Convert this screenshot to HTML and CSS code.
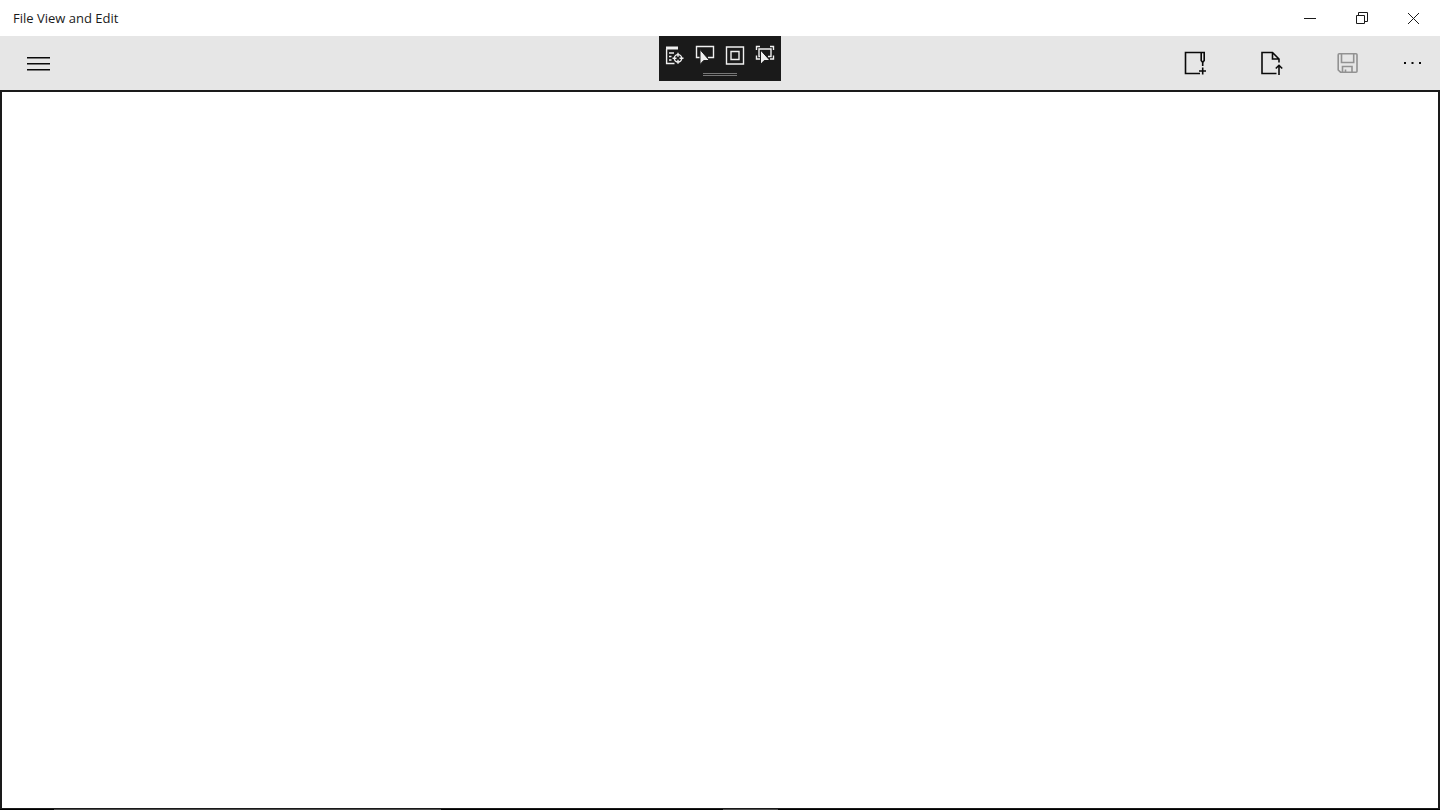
FILE: index.html
```html
<!DOCTYPE html>
<html lang="en">
<head>
    <meta charset="UTF-8">
    <meta name="viewport" content="width=device-width, initial-scale=1.0">
    <title>File View and Edit</title>
    <link rel="stylesheet" href="styles.css">
</head>
<body>

    <!-- Title bar -->
    <header class="titlebar">
        <h1>File View and Edit</h1>
        <div class="window-buttons">
            <button type="button" aria-label="Minimize">
                <svg width="14" height="14" viewBox="0 0 14 14"><path d="M1 7.5h12"/></svg>
            </button>
            <button type="button" aria-label="Restore">
                <svg width="14" height="14" viewBox="0 0 14 14"><path d="M1.5 4.5h8v8h-8zM3.5 4.5v-3h9v9h-3"/></svg>
            </button>
            <button type="button" aria-label="Close">
                <svg width="14" height="14" viewBox="0 0 14 14"><path d="M1 2l11 11M12 2L1 13"/></svg>
            </button>
        </div>
    </header>

    <!-- Command bar -->
    <nav class="toolbar">
        <button type="button" class="tool" aria-label="Menu">
            <svg width="40" height="38" viewBox="0 0 40 38"><path d="M9 13.75h23M9 19.75h23M9 25.75h23"/></svg>
        </button>

        <div class="commands">
            <button type="button" class="tool" aria-label="New">
                <svg width="40" height="38" viewBox="0 0 40 38">
                    <path d="M25 29.5H10.5V8.5H29.2V16.5L27.7 18.5L26.2 16.5V8.5M27.7 18v4M27.7 23.5v7M24 27h7"/>
                </svg>
            </button>
            <button type="button" class="tool" aria-label="Open">
                <svg width="40" height="38" viewBox="0 0 40 38">
                    <path d="M25.5 29.5H11V8.5H21.5L28 15V18.5M21.5 8.5V15H28M28 31V21.5M24.8 24.5L28 21.3L31.2 24.5"/>
                </svg>
            </button>
            <button type="button" class="tool" aria-label="Save" disabled>
                <svg width="40" height="38" viewBox="0 0 40 38">
                    <path d="M13.5 28.2L11.2 26V10.7Q11.2 9.7 12.2 9.7H29Q30 9.7 30 10.7V27.2Q30 28.2 29 28.2ZM14.5 10V18.5H26.7V10M15.5 28V22.5H25V28M18.5 28V25.5"/>
                </svg>
            </button>
            <button type="button" class="tool more" aria-label="More">
                <svg width="19" height="4" viewBox="0 0 19 4"><path class="solid" d="M1 1h2v2h-2zM8.500 1h2v2h-2zM16 1h2v2h-2z"/></svg>
            </button>
        </div>

        <!-- Floating debug tools -->
        <div class="debugbar">
            <div class="debug-buttons">
                <button type="button" aria-label="Go to live visual tree">
                    <svg width="30" height="38" viewBox="0 0 30 38">
                        <path class="solid" d="M6 10.5h12v3h-12z"/>
                        <path d="M6.6 13V27.5H14.5M9 17h5M9 20.5h2.5M9 24h2.5"/>
                        <circle cx="18" cy="22.3" r="3.7"/>
                        <path d="M18 16.8v4M18 23.8v4M12.5 22.3h4M19.5 22.3h4"/>
                    </svg>
                </button>
                <button type="button" aria-label="Enable selection">
                    <svg width="30" height="38" viewBox="0 0 30 38">
                        <path d="M10 21.5H6.5V10.5H23.5V21.5H18"/>
                        <path class="cursor" d="M10 13.5V28.5L13.7 24.5H19.5Z"/>
                    </svg>
                </button>
                <button type="button" aria-label="Display layout adorners">
                    <svg width="30" height="38" viewBox="0 0 30 38"><path d="M6.5 11h17v17h-17zM11 15.500h8v8h-8z"/></svg>
                </button>
                <button type="button" aria-label="Track focused element">
                    <svg width="30" height="38" viewBox="0 0 30 38">
                        <path d="M6.5 14V10.5H10M20 10.5h3.5V14M6.5 19.5V23H10M20 23h3.5V19.5M11 20.5H9V13H21V20.5H18"/>
                        <path class="cursor" d="M10.500 14V28.500L14.200 24.500H20Z"/>
                    </svg>
                </button>
            </div>
            <div class="grip"></div>
        </div>
    </nav>

    <main class="page"></main>

    <!-- Top edge of the taskbar -->
    <footer class="taskbar">
        <span class="search-edge"></span>
        <span class="app-edge"></span>
    </footer>

</body>
</html>
```
FILE: styles.css
```css
body {
    margin: 0;
    min-height: 100vh;
    display: flex;
    flex-direction: column;
    background-color: #ffffff;
    color: #1a1a1a;
    font-family: 'Open Sans', 'Noto Sans', sans-serif;
}

button {
    display: flex;
    align-items: center;
    justify-content: center;
    padding: 0;
    border: 0;
    background: none;
    color: inherit;
}

svg {
    display: block;
    fill: none;
    stroke: currentColor;
    stroke-width: 1.6;
}

.solid {
    fill: currentColor;
    stroke: none;
}

.cursor {
    fill: currentColor;
    stroke: #1a1a1a;
    stroke-width: 1;
}

/* Title bar */
.titlebar {
    display: flex;
    justify-content: space-between;
    height: 36px;
    padding-left: 13px;
}

.titlebar h1 {
    margin: 0;
    font-size: 13px;
    font-weight: 400;
    line-height: 36px;
}

.window-buttons {
    display: flex;
}

.window-buttons button {
    width: 52px;
}

.window-buttons svg {
    stroke-width: 1;
}

.window-buttons button:hover,
.tool:hover {
    background-color: #d5d5d5;
}

/* Command bar */
.toolbar {
    position: relative;
    display: flex;
    justify-content: space-between;
    height: 54px;
    background-color: #e6e6e6;
}

.commands {
    display: flex;
}

.tool {
    width: 76px;
    color: #0a0a0a;
}

.tool:disabled {
    color: #929292;
    background: none;
}

.more {
    width: 55px;
}

/* Debug tools */
.debugbar {
    position: absolute;
    top: 0;
    left: 50%;
    transform: translateX(-50%);
    padding: 0 1px 5px;
    background-color: #1a1a1a;
    color: #f0f0f0;
}

.debug-buttons {
    display: flex;
}

.debug-buttons svg {
    stroke-width: 1.4;
}

.grip {
    width: 34px;
    height: 0;
    margin: -1px auto 0;
    padding-top: 1px;
    border-top: 1px solid #777777;
    border-bottom: 1px solid #777777;
}

/* Page area */
.page {
    flex: 1;
    border: 2px solid #1a1a1a;
    border-bottom-width: 1px;
}

.taskbar {
    display: flex;
    height: 1px;
    background-color: #000000;
}

.search-edge {
    width: 387px;
    margin-left: 54px;
    background-color: #4a4a4a;
}

.app-edge {
    width: 55px;
    margin-left: 282px;
    background-color: #4a4a4a;
}
```
